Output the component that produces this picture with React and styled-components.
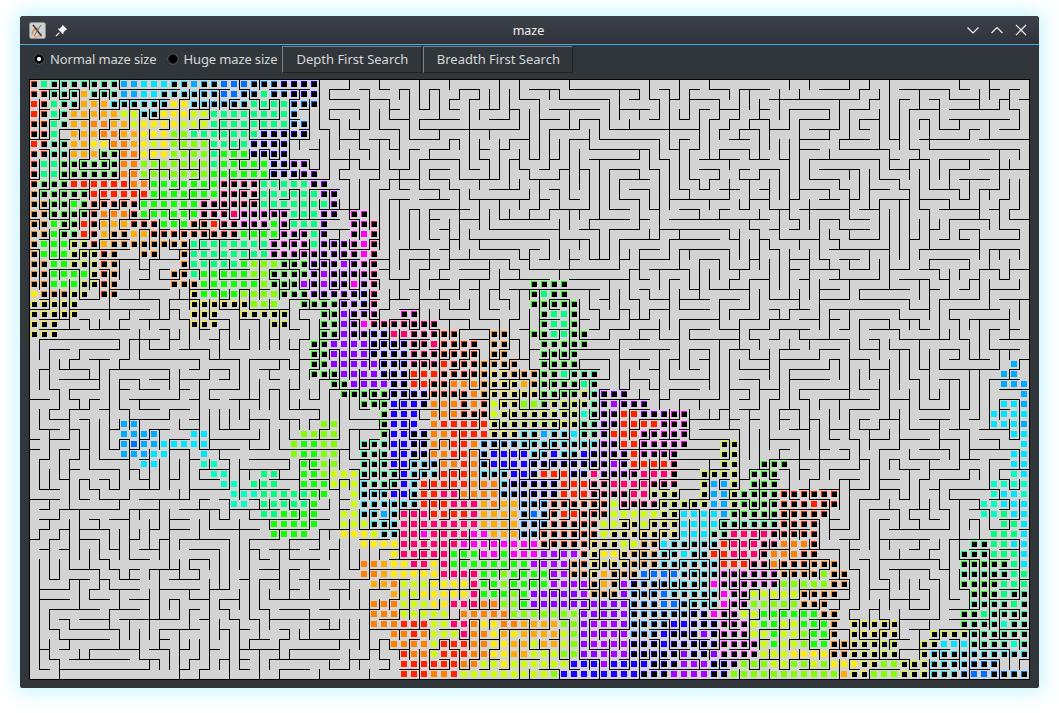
import React from 'react';
import styled, { createGlobalStyle } from 'styled-components';

const COLS = 100;
const ROWS = 60;
const CELL = 10;

const GlobalStyle = createGlobalStyle`
  html, body {
    margin: 0;
    background: #ffffff;
  }
`;

const Page = styled.div`
  padding: 16px 20px 24px;
  width: 1019px;
`;

const Window = styled.div`
  width: 1019px;
  height: 672px;
  background: #31363b;
  border-radius: 3px 3px 2px 2px;
  box-shadow: 0 0 20px 4px rgba(130, 235, 255, 0.45);
  font-family: 'Noto Sans', sans-serif;
  font-size: 13px;
  color: #eff0f1;
  overflow: hidden;
`;

const TitleBar = styled.header`
  display: grid;
  grid-template-columns: 1fr auto 1fr;
  align-items: center;
  height: 29px;
  box-sizing: border-box;
  background: linear-gradient(#3d424a, #2f3338);
  border-bottom: 1px solid #3daee9;
  padding: 0 11px 0 9px;
`;

const TitleLeft = styled.div`
  display: flex;
  align-items: center;
  gap: 9px;
`;

const TitleText = styled.span`
  font-size: 12.5px;
  color: #eff0f1;
`;

const TitleButtons = styled.div`
  display: flex;
  justify-content: flex-end;
  gap: 10px;
`;

const Toolbar = styled.div`
  display: flex;
  align-items: flex-start;
  height: 34px;
  box-sizing: border-box;
  padding: 1px 0 0 14px;
`;

const Radio = styled.label`
  display: flex;
  align-items: center;
  gap: 6px;
  height: 27px;
  box-sizing: border-box;
  padding-bottom: 2px;
  margin-right: ${(p) => p.$gap}px;
  color: #d5d8da;
  letter-spacing: -0.13px;
`;

const RadioDot = styled.span`
  display: block;
  width: 10px;
  height: 10px;
  box-sizing: border-box;
  border-radius: 50%;
  background: ${(p) => (p.$on
    ? 'radial-gradient(circle, #ffffff 0 1.8px, #000000 2.4px)'
    : '#000000')};
  border: 1px solid #1c1e21;
  box-shadow: 0 0 0 0.5px #5a6066;
`;

const PushButton = styled.button`
  width: ${(p) => p.$width}px;
  height: 27px;
  margin-right: 1px;
  padding: 0 0 2px;
  box-sizing: border-box;
  background: #31363b;
  border: 1px solid;
  border-color: #7c8186 #1e2124 #1e2124 #7c8186;
  color: #d5d8da;
  font: inherit;
`;

const MazeFrame = styled.div`
  margin-left: 9px;
  width: 1001px;
  height: 601px;
`;

const MazeSvg = styled.svg`
  display: block;
`;

// what the search has reached: "col:cells", upper case = on the frontier, lower case = done
const TRAIL = [
  '0:rSsssssssBBCCCccBbbDDDdddnnnn',
  '0:rrsssAsssBBCCccccbbDDddSddnnn',
  '0:RrSssAAAccccccYYccbbbbSSSSddd',
  '0:RrSsAAAAALLccYYYLLSSSSSSSSd',
  '0:rrSsAAOOAALYYYYLLLSSSSSSSSdd',
  '0:rrS 4:AAAOOAAYYYGGSSSSSSSnnnnn',
  '0:RrssAAYYOOAYLYGGGGSSSSnnnn',
  '0:rrssAAAhhOOYYYGGGGSHHHnnnn',
  '0:rSShhhhhhOOGGGGGGGSHHHHHnnvv',
  '0:rSShhhhhhOOGGGGGGGHHHHHHnnnvv',
  '0:rhhhRRRRRROOHHHHHHHkkkkSSSSSvv',
  '0:ohhhhhRRRRRRHHHHHHHkkkkSSSSSSvv',
  '0:oohhHhrrrrrHHHHHHkkkkkkSSSSSSSv',
  '0:oohhhhrOOOrHHHHHHkkkKmmmmmSSSvv 32:mm',
  '0:ooHhhRrAAArrrHHHrrRkkmmmHmSSSv 32:mmk',
  '0:ooHhhRrAooAArrrrrrrrrHHHHmmmSv 32:mMk',
  '0:oHHHllrAooooooooSSSSSSSSmmmmSvvvmMk',
  '0:oHHHlllro 11:oo 15:oSSSSSSSSmmmmmvvvmMk',
  '0:ooHHlllro 15:oSSSSSHGGGhhhvvvPvmk',
  '0:ooHHHHlro 14:ooSHHHHHGGhhhhvPvvvmk',
  '0:ooHHHllro 14:oooHHHHHHGhhhPvPvvMvk 50:hhhh',
  '0:Yoooll 7:ro 16:yHHHHGGGGhhhvvvvvnk 50:hShh',
  '0:yyyyl 16:yyyyyyGGG 27:hhhhvvnk 50:hhhhh',
  '0:yyyyy 16:yyy 21:yllll 29:hhVvvm 37:mm 51:hSSh',
  '0:yyy 16:yyy 24:ll 29:hhVvMkkkkkkk 51:hSSh',
  '0:yyy 29:hhVvvnnKKkkkrr 46:oo 50:hhSShh',
  '28:hhVVVVnnnnkkKrrrr 46:oo 51:hhhhh',
  '28:hhVVVVnnnnkkkrrrr 46:oo 51:hhhh',
  '28:hhVVVVVnnnkkkRrrroooo 51:hhhh 98:B',
  '28:hhhVVVVnnnRRRrrrroyyooohhSsss 97:BB',
  '30:hhVVVVnnRRrrOOOoyyyAohhhhSs 97:BBB',
  '31:hhhhhnnnnrrrrOoyyyyyhhhhlsvvv 99:B',
  '33:hhhNNNnOOOrOrLyyGGhllllsvPvvv 97:CCB',
  '35:hNNN 40:OOOrrrLllllllllTsvvRRvvvmm 96:CCCC',
  '9:BB 29:GG 35:hNNN 40:ORRRRRlllllllllssvvRRRRmmm 96:CCCB',
  '9:BBBB 16:CC 27:GGGG 35:hNNnnOORRRRyyyccBccCssvRRRmmmmm 98:CC',
  '9:BDBBCCCCC 26:GHHGG 33:sssNNnnOORROddddccccccccvvRRmmmmm 69:ll 99:C',
  '9:BBBCC 17:C 26:GHHGG 33:sssNNnnOORROdNNNNccNccNnvvvRmmmm 69:ll 98:CC',
  '11:CC 17:TT 27:HHGG 33:sssNNccdOOROdNNNNnnnnnnnvPvRRRRk 69:ll 73:hhh 98:CC',
  '18:TT 23:SS 27:HHGLLL 33:ssssNcccRRROcccNNnRRRnnKvvvmKKKk 67:llll 72:hhh 98:TC',
  '19:TT 22:SSS 27:HHHLLL 33:csssNcRRRRROOOcnnnnnRRRkkKKKKkkk 67:lBBl 72:hhh 96:TTTT',
  '20:TTTSSSSSHH 32:L 33:cccNNcRRKKOOOOddnnnnRRRkkkkKKlll 67:lBBlhhhhrrrrrr 96:TCCT',
  '20:TT 23:SSSSSH 32:LccccccRRRKKKAOAAdddrrrrrrLkkkklllllBBlhhhhrrrRrr 95:TTCCC',
  '23:SSHHHH 31:LLccBcKKKRRRRKAAAAdDdrRRrrrLLLLLllCCCCBhhhhhrrrrr 95:TTSCC',
  '24:HHHHH 31:LLLcccKKKKKKKKAAAAdddrrrrrLLyyLyyyCCCCssssssrrrr 97:SSC',
  '24:HHHH 31:YYYLccKKMKKKKMMAAAddrrrrrrLyyyyyyyCCCssKKKKkrrrr 96:SSSC',
  '33:YYYYKKKKKKMMMMMMMMrrrrryyyLLooCcccccRKKKkkOOOr 94:ssSSCC',
  '36:YKKKKKHHHMMHMMMPPPPryYYyooocc 65:CccRRKKKkOOOrr 93:sssSSSC',
  '33:OOAYYKKYKHHHHHHHHPPPPoryyyyoooccccccRRRkkOrrrooo 93:hhhhhSC',
  '33:OOAYYYYYKKKKHHGHHHHPPooyAoooDDDDccccmmmmmmooooGoo 93:sssssSS',
  '34:AAOLLLYYYYKHHGHHHHPPPPoAoPndddccccMmmmmmmGGGGGoo 93:hhhhSSS',
  '36:ALLYYYYYKHHHGHVVVVVPoooVdddDcccccMmmLLLLLoooo 94:hhhSss',
  '34:OOOLLLYYKKKOOGGHVVVVVVVVVVdddDDdcccMmmGGGGGooo 94:ssssSs',
  '34:OOOLLLLL 43:OOOOOGGGGGGGVVVVVddddddnnMmmLLHHHHHHoo 93:hhSssss',
  '34:OOORRRLLKKOYYOOAAAAGGVPPPVddddNNnnnmmmLHHLLHHHo 82:yyyyy 93:hsssTss',
  '36:OOROLLLKOOYAYAAAALGVPPPPdddNnnnVnmmmLLHLLGHHo 82:yyyyy 90:llllssssss',
  '36:OOOOLRRROOYYAALAALGVPPPPnnnNnnnnnmmmmLHLLGHHooyllll 89:llCCCssssTs',
  '37:ROOLRRROOYYAALLLGGVVPPPnnnnnVnnVmmmmLLLYYYYooyllll 89:lcccccccccc',
  '37:RRRRRROOLLYLLLLLLNNNPNNNNnnnPPPnnvGGGLLGGLGYYYyyGGll 89:lccccddd',
  '37:RRROORLLLLLLLLLGNNNNNNNNnnnPPPPnnGGGGGGGGGGGAyyGGGlllcccdDDdddd',
];

const COLOURS = {
  r: '#ff2200', o: '#ff8000', a: '#ffaa00', y: '#ffee00', l: '#ccff00', g: '#80ff00',
  h: '#11ff00', s: '#00ff80', t: '#00ffc4', c: '#00e5ff', b: '#00aaff', d: '#0070ff',
  n: '#1a00ff', v: '#8c00ff', p: '#aa00ff', m: '#ff00f0', k: '#ff0070',
};

function buildCells() {
  const fills = {};
  let holes = '';
  TRAIL.forEach((line, row) => {
    line.split(' ').forEach((token) => {
      const [start, cells] = token.split(':');
      [...cells].forEach((letter, i) => {
        const col = Number(start) + i;
        const key = letter.toLowerCase();
        const x = col * CELL + 2;
        const y = row * CELL + 2;
        fills[key] = (fills[key] || '') + `M${x} ${y}h6v6h-6z`;
        if (letter === key) holes += `M${x + 1} ${y + 1}h5v5h-5z`;
      });
    });
  });
  return { fills, holes };
}

// growing tree carve with a fixed seed, so every load gives the same maze
function buildWalls() {
  let seed = 20240611;
  const rand = () => {
    seed = (seed + 0x6d2b79f5) | 0;
    let t = Math.imul(seed ^ (seed >>> 15), 1 | seed);
    t = (t + Math.imul(t ^ (t >>> 7), 61 | t)) ^ t;
    return ((t ^ (t >>> 14)) >>> 0) / 4294967296;
  };
  const seen = new Uint8Array(COLS * ROWS);
  const openRight = new Uint8Array(COLS * ROWS);
  const openDown = new Uint8Array(COLS * ROWS);
  const heading = new Int16Array(COLS * ROWS);
  const active = [0];
  seen[0] = 1;
  while (active.length) {
    const at = rand() < 0.78 ? active.length - 1 : Math.floor(rand() * active.length);
    const cell = active[at];
    const col = cell % COLS;
    const row = Math.floor(cell / COLS);
    const options = [];
    if (col > 0 && !seen[cell - 1]) options.push(-1);
    if (col < COLS - 1 && !seen[cell + 1]) options.push(1);
    if (row > 0 && !seen[cell - COLS]) options.push(-COLS);
    if (row < ROWS - 1 && !seen[cell + COLS]) options.push(COLS);
    if (!options.length) {
      active.splice(at, 1);
      continue;
    }
    const keepGoing = options.includes(heading[cell]) && rand() < 0.22;
    const step = keepGoing ? heading[cell] : options[Math.floor(rand() * options.length)];
    const next = cell + step;
    if (step === 1) openRight[cell] = 1;
    if (step === -1) openRight[next] = 1;
    if (step === COLS) openDown[cell] = 1;
    if (step === -COLS) openDown[next] = 1;
    seen[next] = 1;
    heading[next] = step;
    active.push(next);
  }
  let d = '';
  for (let row = 0; row < ROWS; row++) {
    for (let col = 0; col < COLS; col++) {
      const cell = row * COLS + col;
      const x = col * CELL;
      const y = row * CELL;
      if (col < COLS - 1 && !openRight[cell]) d += `M${x + CELL + 0.5} ${y}v${CELL + 1}`;
      if (row < ROWS - 1 && !openDown[cell]) d += `M${x} ${y + CELL + 0.5}h${CELL + 1}`;
    }
  }
  return d;
}

const cells = buildCells();
const walls = buildWalls();

function Maze() {
  return (
    <MazeSvg width="1001" height="601" viewBox="0 0 1001 601">
      <rect x="0.5" y="0.5" width="1000" height="600" fill="#d3d3d3" stroke="#000000" />
      {Object.keys(cells.fills).map((key) => (
        <path key={key} d={cells.fills[key]} fill={COLOURS[key]} />
      ))}
      <path d={cells.holes} fill="#000000" />
      <path d={walls} stroke="#000000" fill="none" shapeRendering="crispEdges" />
    </MazeSvg>
  );
}

function AppIcon() {
  return (
    <svg width="17" height="17" viewBox="0 0 17 17">
      <rect x="0.5" y="0.5" width="16" height="16" rx="2" fill="#cfd0d0" stroke="#8e9194" />
      <path d="M3.5 12.5C3 8.5 6 6 9.5 6.5" stroke="#e8894a" strokeWidth="1.7" fill="none" />
      <path d="M5 14.5A6 6 0 0 0 13 11" stroke="#e8a070" strokeWidth="1.3" fill="none" />
      <path d="M4 3L12.5 14" stroke="#3a3a3a" strokeWidth="1.5" />
      <path d="M12 3L5 14" stroke="#555555" strokeWidth="0.8" />
    </svg>
  );
}

function PinIcon() {
  return (
    <svg width="13" height="13" viewBox="0 0 13 13">
      <path d="M7.6 0.8L12.2 5.4L10.8 6L8.6 8.2L8.2 10.4L2.6 4.8L4.8 4.4L7 2.2z" fill="#f4f5f5" />
      <path d="M4.4 8.6L1 12" stroke="#f4f5f5" strokeWidth="1.3" />
    </svg>
  );
}

function WindowGlyph({ d }) {
  return (
    <svg width="14" height="14" viewBox="0 0 14 14">
      <path d={d} stroke="#eff0f1" strokeWidth="1.2" fill="none" />
    </svg>
  );
}

export default function App() {
  return (
    <Page>
      <GlobalStyle />
      <Window>
        <TitleBar>
          <TitleLeft>
            <AppIcon />
            <PinIcon />
          </TitleLeft>
          <TitleText>maze</TitleText>
          <TitleButtons>
            <WindowGlyph d="M1.5 4.5L7 10L12.5 4.5" />
            <WindowGlyph d="M1.5 10L7 4.5L12.5 10" />
            <WindowGlyph d="M2 2L12 12M12 2L2 12" />
          </TitleButtons>
        </TitleBar>
        <Toolbar>
          <Radio $gap={11}>
            <RadioDot $on />
            Normal maze size
          </Radio>
          <Radio $gap={5}>
            <RadioDot />
            Huge maze size
          </Radio>
          <PushButton $width={140}>Depth First Search</PushButton>
          <PushButton $width={150}>Breadth First Search</PushButton>
        </Toolbar>
        <MazeFrame>
          <Maze />
        </MazeFrame>
      </Window>
    </Page>
  );
}
